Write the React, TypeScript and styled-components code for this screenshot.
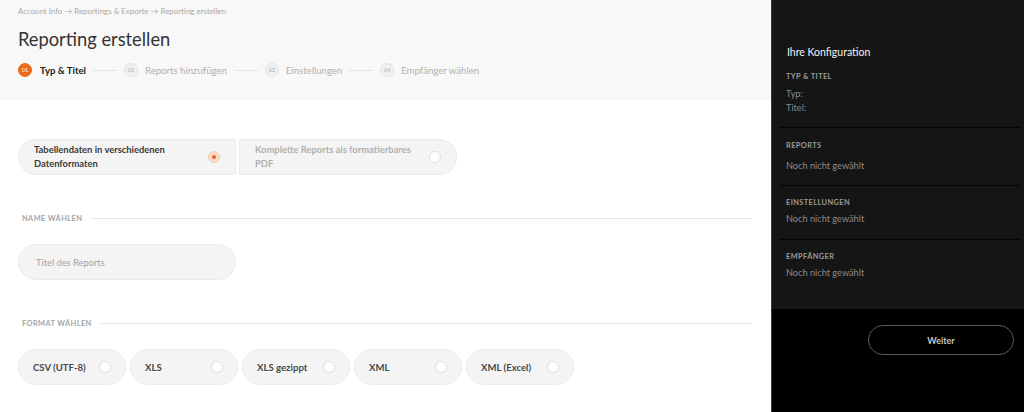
import React from "react";
import styled, { createGlobalStyle } from "styled-components";

const Global = createGlobalStyle`
  html, body { margin: 0; padding: 0; }
  body { font-family: Lato, "Open Sans", Arial, sans-serif; background: #fff; }
  * { box-sizing: border-box; }
`;

const Page = styled.div`
  display: grid;
  grid-template-columns: 771px 253px;
  width: 1024px;
  height: 412px;
  overflow: hidden;
`;

const Main = styled.main`
  display: flex;
  flex-direction: column;
  background: #fff;
`;

const Header = styled.header`
  background: #f8f8f8;
  height: 100px;
  padding: 6px 18px 0;
`;

const Breadcrumb = styled.div`
  font-size: 7.9px;
  color: #a8a8a8;
  height: 11px;
  line-height: 11px;
`;

const Title = styled.h1`
  margin: 11px 0 0;
  font-size: 18.3px;
  font-weight: 400;
  color: #333;
  line-height: 22px;
`;

const Steps = styled.div`
  display: flex;
  align-items: center;
  margin-top: 13px;
  height: 14px;
`;

const StepCircle = styled.span<{ $active?: boolean }>`
  width: 14px;
  height: 14px;
  border-radius: 50%;
  display: inline-flex;
  align-items: center;
  justify-content: center;
  font-size: 5.5px;
  flex: none;
  background: ${(p) => (p.$active ? "#ec6a1c" : "#f1f1f1")};
  color: ${(p) => (p.$active ? "#fff" : "#b0b0b0")};
  border: 1px solid ${(p) => (p.$active ? "#ec6a1c" : "#e2e2e2")};
`;

const StepLabel = styled.span<{ $active?: boolean }>`
  margin-left: ${(p) => (p.$active ? 8 : 7)}px;
  font-size: 9.6px;
  font-weight: ${(p) => (p.$active ? 700 : 400)};
  color: ${(p) => (p.$active ? "#222" : "#b0b0b0")};
  white-space: nowrap;
`;

const StepLine = styled.span`
  width: 24px;
  height: 1px;
  background: #e4e4e4;
  margin: 0 7px;
  flex: none;
`;

const Content = styled.div`
  padding: 39px 19px 0 18px;
  display: flex;
  flex-direction: column;
`;

const TypeRow = styled.div`
  display: flex;
  gap: 3px;
`;

const TypeCard = styled.div<{ $side: "left" | "right"; $selected?: boolean }>`
  width: 218px;
  height: 36px;
  display: flex;
  align-items: center;
  justify-content: space-between;
  padding: 0 15px 0 15px;
  background: #f4f4f4;
  border: 1px solid #ebebeb;
  border-radius: ${(p) => (p.$side === "left" ? "18px 2px 2px 18px" : "2px 18px 18px 2px")};
  font-size: 9.4px;
  line-height: 14px;
  font-weight: 700;
  color: ${(p) => (p.$selected ? "#3a3a3a" : "#b0b0b0")};
`;

const CardText = styled.span`
  width: 165px;
`;

const Radio = styled.span<{ $checked?: boolean }>`
  width: 12px;
  height: 12px;
  border-radius: 50%;
  flex: none;
  display: inline-flex;
  align-items: center;
  justify-content: center;
  background: ${(p) => (p.$checked ? "#fadcc6" : "#fff")};
  border: 1px solid ${(p) => (p.$checked ? "#f6cfb2" : "#dedede")};
  &::after {
    content: "";
    width: 4px;
    height: 4px;
    border-radius: 50%;
    background: ${(p) => (p.$checked ? "#dd6a25" : "transparent")};
  }
`;

const SectionLabel = styled.div<{ $top: number }>`
  display: flex;
  align-items: center;
  margin-top: ${(p) => p.$top}px;
  padding-left: 4px;
  font-size: 7.4px;
  font-weight: 700;
  letter-spacing: 0.4px;
  color: #a5a5a5;
  text-transform: uppercase;
  height: 10px;
  &::after {
    content: "";
    flex: 1;
    height: 1px;
    background: #e8e8e8;
    margin-left: 8px;
  }
`;

const Input = styled.div`
  margin-top: 21px;
  width: 218px;
  height: 36px;
  border-radius: 18px;
  background: #f4f4f4;
  border: 1px solid #ebebeb;
  display: flex;
  align-items: center;
  padding-left: 17px;
  font-size: 9.3px;
  color: #a3a3a3;
`;

const FormatRow = styled.div`
  display: flex;
  gap: 4px;
  margin-top: 21px;
`;

const FormatPill = styled.div`
  width: 108px;
  height: 36px;
  border-radius: 18px;
  background: #f4f4f4;
  border: 1px solid #ebebeb;
  display: flex;
  align-items: center;
  justify-content: space-between;
  padding: 0 14px 0 14px;
  font-size: 9.6px;
  font-weight: 700;
  color: #4a4a4a;
`;

const Sidebar = styled.aside`
  background: #000;
  display: flex;
  flex-direction: column;
  border-left: 1px solid #3a3a3a;
`;

const Panel = styled.div`
  background: #151515;
  height: 309px;
  padding: 45px 3px 0 7px;
`;

const PanelTitle = styled.div`
  padding-left: 8px;
  font-size: 10.5px;
  color: #f4f4f4;
  line-height: 14px;
`;

const Section = styled.div<{ $pt: number; $h: number; $last?: boolean }>`
  padding: ${(p) => p.$pt}px 0 0 7px;
  height: ${(p) => p.$h}px;
  border-bottom: ${(p) => (p.$last ? "none" : "1px solid #050505")};
`;

const SectionHead = styled.div`
  font-size: 7.4px;
  font-weight: 700;
  letter-spacing: 0.4px;
  color: #9a9a9a;
  text-transform: uppercase;
  line-height: 10px;
`;

const SectionValue = styled.div<{ $mt: number }>`
  margin-top: ${(p) => p.$mt}px;
  font-size: 9.2px;
  color: #8a8a8a;
  line-height: 14px;
`;

const Footer = styled.div`
  display: flex;
  justify-content: flex-end;
  padding: 16px 10px 0 0;
`;

const Button = styled.button`
  width: 146px;
  height: 30px;
  border-radius: 15px;
  background: transparent;
  border: 1px solid #5a5a5a;
  color: #c5c5c5;
  font-family: inherit;
  font-size: 9px;
  font-weight: 700;
`;

const steps = [
  { n: "01", label: "Typ & Titel" },
  { n: "02", label: "Reports hinzufügen" },
  { n: "03", label: "Einstellungen" },
  { n: "04", label: "Empfänger wählen" },
];

const formats = ["CSV (UTF-8)", "XLS", "XLS gezippt", "XML", "XML (Excel)"];

export default function App() {
  return (
    <Page>
      <Global />
      <Main>
        <Header>
          <Breadcrumb>Account Info → Reportings &amp; Exporte → Reporting erstellen</Breadcrumb>
          <Title>Reporting erstellen</Title>
          <Steps>
            {steps.map((s, i) => (
              <React.Fragment key={s.n}>
                {i > 0 && <StepLine />}
                <StepCircle $active={i === 0}>{s.n}</StepCircle>
                <StepLabel $active={i === 0}>{s.label}</StepLabel>
              </React.Fragment>
            ))}
          </Steps>
        </Header>
        <Content>
          <TypeRow>
            <TypeCard $side="left" $selected>
              <CardText>Tabellendaten in verschiedenen Datenformaten</CardText>
              <Radio $checked />
            </TypeCard>
            <TypeCard $side="right">
              <CardText>Komplette Reports als formatierbares PDF</CardText>
              <Radio />
            </TypeCard>
          </TypeRow>
          <SectionLabel $top={38}>Name wählen</SectionLabel>
          <Input>Titel des Reports</Input>
          <SectionLabel $top={38}>Format wählen</SectionLabel>
          <FormatRow>
            {formats.map((f) => (
              <FormatPill key={f}>
                <span>{f}</span>
                <Radio />
              </FormatPill>
            ))}
          </FormatRow>
        </Content>
      </Main>
      <Sidebar>
        <Panel>
          <PanelTitle>Ihre Konfiguration</PanelTitle>
          <Section $pt={13} $h={69}>
            <SectionHead>Typ &amp; Titel</SectionHead>
            <SectionValue $mt={5}>Typ:</SectionValue>
            <SectionValue $mt={0}>Titel:</SectionValue>
          </Section>
          <Section $pt={13} $h={58}>
            <SectionHead>Reports</SectionHead>
            <SectionValue $mt={8}>Noch nicht gewählt</SectionValue>
          </Section>
          <Section $pt={12} $h={54}>
            <SectionHead>Einstellungen</SectionHead>
            <SectionValue $mt={4}>Noch nicht gewählt</SectionValue>
          </Section>
          <Section $pt={12} $h={54} $last>
            <SectionHead>Empfänger</SectionHead>
            <SectionValue $mt={4}>Noch nicht gewählt</SectionValue>
          </Section>
        </Panel>
        <Footer>
          <Button>Weiter</Button>
        </Footer>
      </Sidebar>
    </Page>
  );
}
